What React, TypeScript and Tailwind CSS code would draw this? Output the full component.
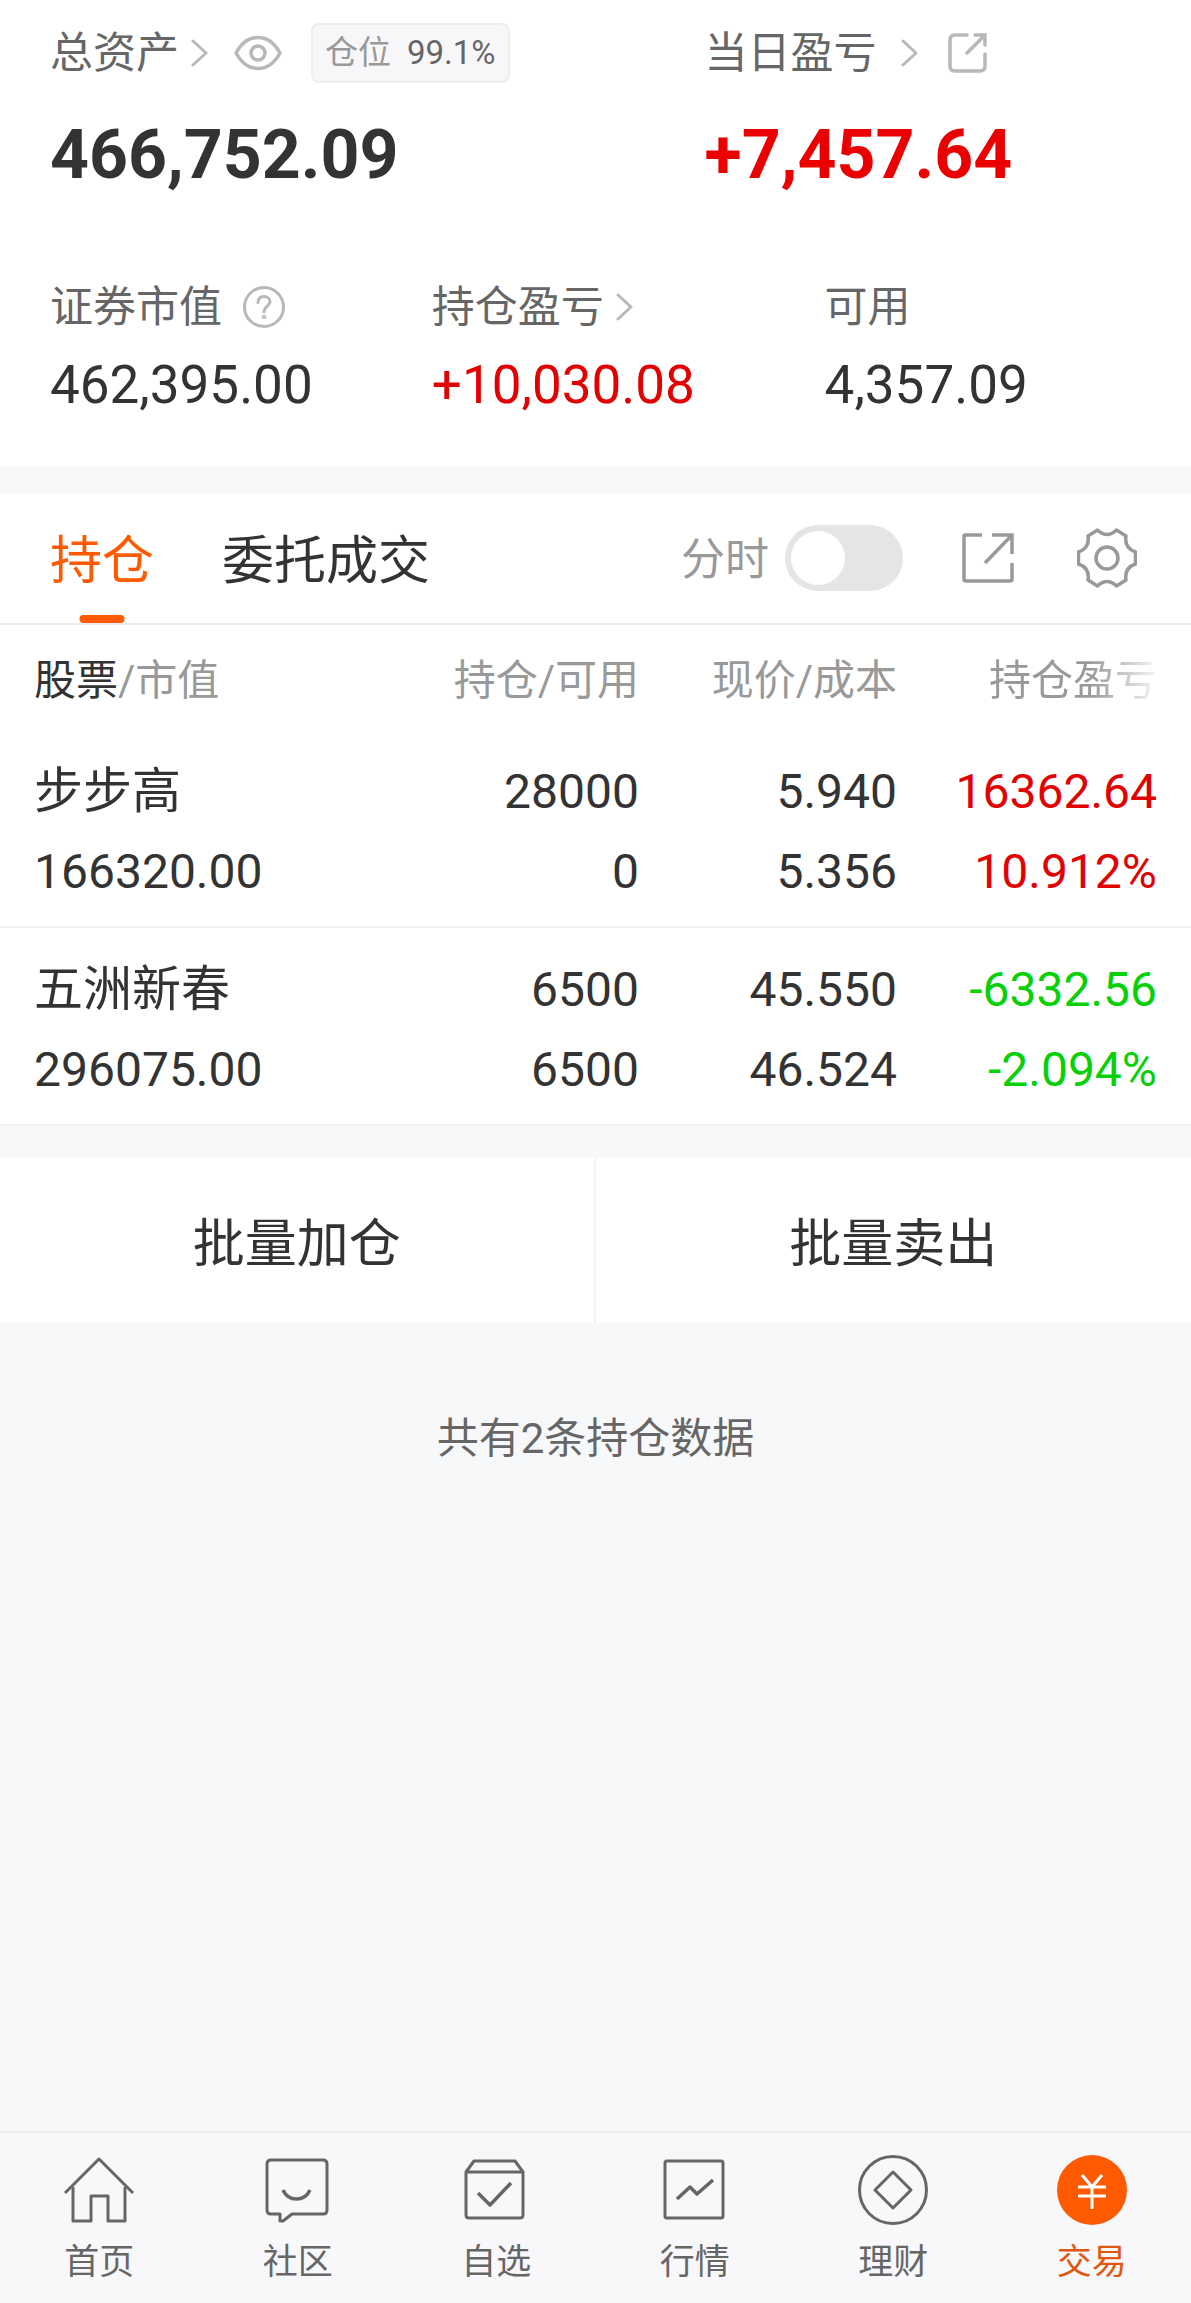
import { useState } from "react";
import type { ReactNode } from "react";

type Holding = {
  name: string;
  value: string;
  amount: string;
  available: string;
  price: string;
  cost: string;
  profit: string;
  percent: string;
};

const holdings: Holding[] = [
  {
    name: "步步高",
    value: "166320.00",
    amount: "28000",
    available: "0",
    price: "5.940",
    cost: "5.356",
    profit: "16362.64",
    percent: "10.912%",
  },
  {
    name: "五洲新春",
    value: "296075.00",
    amount: "6500",
    available: "6500",
    price: "45.550",
    cost: "46.524",
    profit: "-6332.56",
    percent: "-2.094%",
  },
];

const Chevron = () => (
  <svg className="h-7 w-[18px] shrink-0 text-[#b8b8b8]" viewBox="0 0 18 28" fill="none" stroke="currentColor" strokeWidth="3" strokeLinecap="round">
    <path d="M2 2 15 14 2 26" strokeLinejoin="round" />
  </svg>
);

const EyeIcon = () => (
  <svg className="h-9 w-[50px]" viewBox="0 0 50 36" fill="none" stroke="currentColor" strokeWidth="3.5">
    <path d="M3 18C9 7 16 2.500 25 2.500S41 7 47 18C41 29 34 33.500 25 33.500S9 29 3 18Z" strokeLinejoin="round" />
    <circle cx="25" cy="18" r="7" />
  </svg>
);

const ShareIcon = () => (
  <svg className="h-[42px] w-[42px]" viewBox="0 0 42 42" fill="none" stroke="currentColor" strokeWidth="3.5" strokeLinecap="round">
    <path d="M20 3H8Q3 3 3 8V34Q3 39 8 39H33Q38 39 38 34V22" />
    <path d="M28 3H38V13M38 3 20 21" />
  </svg>
);

const HelpIcon = () => (
  <svg className="h-11 w-11" viewBox="0 0 44 44" fill="none" stroke="currentColor" strokeWidth="3" strokeLinecap="round">
    <circle cx="22" cy="22" r="19.500" />
    <path d="M16 17.500C16 13.500 18.500 11.500 22 11.500S28 13.800 28 17C28 20.500 22 21.500 22 27" />
    <circle cx="22" cy="32" r="0.8" />
  </svg>
);

const ExportIcon = () => (
  <svg className="h-[54px] w-[54px]" viewBox="0 0 54 54" fill="none" stroke="currentColor" strokeWidth="3.5">
    <path d="M21 4H4Q3 4 3 5V48Q3 50 5 50H49Q51 50 51 48V32" />
    <path d="M31 4H51V23M51 4 24 32" />
  </svg>
);

const GearIcon = () => (
  <svg className="h-[60px] w-[60px]" viewBox="0 0 60 60" fill="none" stroke="currentColor" strokeWidth="3.5" strokeLinejoin="round">
    <path d="M20.500 2Q30 11 39.500 2L49 8Q47 20 58.500 24V36Q47 40 49 52L39.500 58Q30 49 20.500 58L11 52Q13 40 1.500 36V24Q13 20 11 8Z" />
    <circle cx="30" cy="30" r="11" />
  </svg>
);

const NavIcon = ({ children }: { children: ReactNode }) => (
  <svg className="h-[72px] w-[72px]" viewBox="0 0 72 72" fill="none" stroke="currentColor" strokeWidth="3" strokeLinejoin="round">
    {children}
  </svg>
);

const navItems = [
  {
    label: "首页",
    icon: (
      <NavIcon>
        <path d="M2 39 36 5 70 39" />
        <path d="M10 33V67H28V42H45V67H62V33" />
      </NavIcon>
    ),
  },
  {
    label: "社区",
    icon: (
      <NavIcon>
        <path d="M9 6H61Q65 6 65 10V56Q65 60 61 60H30L21 67H18V60H9Q5 60 5 56V10Q5 6 9 6Z" />
        <path d="M21 36Q25 45 34.500 45T48 36" strokeWidth="3.5" />
      </NavIcon>
    ),
  },
  {
    label: "自选",
    icon: (
      <NavIcon>
        <path d="M6 18 14 7H55L63 18V61Q63 64 60 64H9Q6 64 6 61Z" />
        <path d="M6 18H63" />
        <path d="M18 39 30 51 51 29" strokeWidth="3.5" />
      </NavIcon>
    ),
  },
  {
    label: "行情",
    icon: (
      <NavIcon>
        <rect x="6" y="7" width="58" height="57" rx="2" />
        <path d="M18 45 31 33 38 40 54 26" strokeWidth="3.5" />
      </NavIcon>
    ),
  },
  {
    label: "理财",
    icon: (
      <NavIcon>
        <circle cx="36" cy="36" r="33.500" />
        <path d="M36 18 54 36 36 54 18 36Z" />
      </NavIcon>
    ),
  },
  {
    label: "交易",
    icon: (
      <NavIcon>
        <circle cx="36" cy="36" r="35" fill="#ff5a00" stroke="none" />
        <path d="M26 21 36 33 46 21M22 33H50M22 42H50M36 33V55" stroke="#fff" />
      </NavIcon>
    ),
  },
];

const Summary = () => (
  <section className="bg-white px-[50px] pt-[23px] pb-[55px]">
    <div className="grid grid-cols-[60%_40%]">
      <div>
        <div className="flex h-[60px] items-center text-[43px] leading-[60px] text-[#666]">
          <a href="#assets" className="flex items-center gap-3">
            总资产
            <Chevron />
          </a>
          <button aria-label="隐藏金额" className="ml-6 text-[#b8b8b8]">
            <EyeIcon />
          </button>
          <span className="ml-7 flex h-[60px] items-center gap-4 rounded-lg border-2 border-[#eee] bg-[#f7f7fa] px-3 text-[33px]">
            <span className="text-[#999]">仓位</span>
            <span>99.1%</span>
          </span>
        </div>
        <p className="mt-10 text-[68px] leading-[64px] font-bold text-[#333]">466,752.09</p>
      </div>
      <div>
        <div className="flex h-[60px] items-center text-[43px] leading-[60px] text-[#666]">
          <a href="#today" className="flex items-center gap-6">
            当日盈亏
            <Chevron />
          </a>
          <button aria-label="分享" className="ml-7 text-[#b8b8b8]">
            <ShareIcon />
          </button>
        </div>
        <p className="mt-10 text-[68px] leading-[64px] font-bold text-[#eb0000]">+7,457.64</p>
      </div>
    </div>

    <div className="mt-[97px] grid grid-cols-[35%_36%_29%] text-[53px] leading-[54px] text-[#333]">
      <div>
        <div className="mb-7 flex items-center gap-5 text-[43px] leading-[46px] text-[#666]">
          证券市值
          <button aria-label="说明" className="text-[#b8b8b8]">
            <HelpIcon />
          </button>
        </div>
        <p>462,395.00</p>
      </div>
      <div>
        <a href="#profit" className="mb-7 flex items-center gap-3 text-[43px] leading-[46px] text-[#666]">
          持仓盈亏
          <Chevron />
        </a>
        <p className="text-[#e30000]">+10,030.08</p>
      </div>
      <div>
        <p className="mb-7 text-[43px] leading-[46px] text-[#666]">可用</p>
        <p>4,357.09</p>
      </div>
    </div>
  </section>
);

const Toolbar = () => {
  const [tab, setTab] = useState("持仓");
  const [minute, setMinute] = useState(false);

  return (
    <div className="flex h-[132px] items-stretch justify-between border-b-2 border-[#ececec] pr-[54px] pl-[50px]">
      <div className="flex gap-[68px]">
        {["持仓", "委托成交"].map((item) => (
          <button
            key={item}
            onClick={() => setTab(item)}
            className={`relative pt-2 text-[52px] ${tab === item ? "text-[#ff5a00]" : "text-[#333]"}`}
          >
            {item}
            {tab === item && (
              <span className="absolute bottom-0 left-1/2 h-2 w-[45px] -translate-x-1/2 rounded-full bg-[#ff5a00]"></span>
            )}
          </button>
        ))}
      </div>

      <div className="flex items-center text-[#999]">
        <label htmlFor="minute" className="mr-4 pt-1 text-[44px]">
          分时
        </label>
        <input
          id="minute"
          type="checkbox"
          checked={minute}
          onChange={(e) => setMinute(e.target.checked)}
          className="flex h-[66px] w-[118px] appearance-none items-center rounded-full bg-[#e5e5e8] px-[6px] before:h-[54px] before:w-[54px] before:rounded-full before:bg-white checked:justify-end checked:bg-[#ff5a00]"
        />
        <button aria-label="导出" className="ml-[58px]">
          <ExportIcon />
        </button>
        <button aria-label="设置" className="ml-[62px]">
          <GearIcon />
        </button>
      </div>
    </div>
  );
};

const HoldingsTable = () => (
  <table className="w-full table-fixed text-right text-5xl text-[#333]">
    <thead>
      <tr className="h-[104px] text-[42px] text-[#999]">
        <th className="pt-2 pl-[34px] text-left font-normal">
          <span className="text-[#333]">股票</span>/市值
        </th>
        <th className="w-[258px] pt-2 font-normal">持仓/可用</th>
        <th className="w-[258px] pt-2 font-normal">现价/成本</th>
        <th className="w-[294px] pt-2 pr-[34px] font-normal">
          <span className="bg-linear-to-r from-[#999] from-60% to-[#f5f5f5] bg-clip-text text-transparent">持仓盈亏</span>
        </th>
      </tr>
    </thead>
    <tbody>
      {holdings.map((item) => (
        <tr key={item.name} className="h-[198px] border-b-2 border-[#f3f3f5] leading-[80px]">
          <td className="pt-2 pl-[34px] text-left">
            <p className="text-[49px]">{item.name}</p>
            <p>{item.value}</p>
          </td>
          <td className="pt-2">
            <p>{item.amount}</p>
            <p>{item.available}</p>
          </td>
          <td className="pt-2">
            <p>{item.price}</p>
            <p>{item.cost}</p>
          </td>
          <td className={`pt-2 pr-[34px] ${item.profit.startsWith("-") ? "text-[#06d006]" : "text-[#e30000]"}`}>
            <p>{item.profit}</p>
            <p>{item.percent}</p>
          </td>
        </tr>
      ))}
    </tbody>
  </table>
);

export default function App() {
  const [active, setActive] = useState("交易");

  return (
    <div className="flex min-h-screen flex-col bg-[#f7f8fa] font-['Roboto','Noto_Sans_CJK_SC',sans-serif] whitespace-nowrap">
      <Summary />

      <section className="mt-[26px] bg-white">
        <Toolbar />
        <HoldingsTable />
      </section>

      <div className="mt-8 grid grid-cols-2 divide-x-2 divide-[#f3f3f5] bg-white text-[52px] text-[#333]">
        <button className="h-[165px] pt-2">批量加仓</button>
        <button className="h-[165px] pt-2">批量卖出</button>
      </div>

      <p className="mt-[86px] text-center text-[42px] leading-[60px] text-[#666]">共有2条持仓数据</p>

      <nav className="mt-auto grid grid-cols-6 border-t-2 border-[#ececee] bg-[#f8f8fa] pt-[21px] pb-[19px]">
        {navItems.map((item) => (
          <button
            key={item.label}
            onClick={() => setActive(item.label)}
            className={`flex flex-col items-center gap-4 text-[35px] leading-[42px] ${active === item.label ? "text-[#e2570f]" : "text-[#666]"}`}
          >
            {item.icon}
            {item.label}
          </button>
        ))}
      </nav>
    </div>
  );
}
